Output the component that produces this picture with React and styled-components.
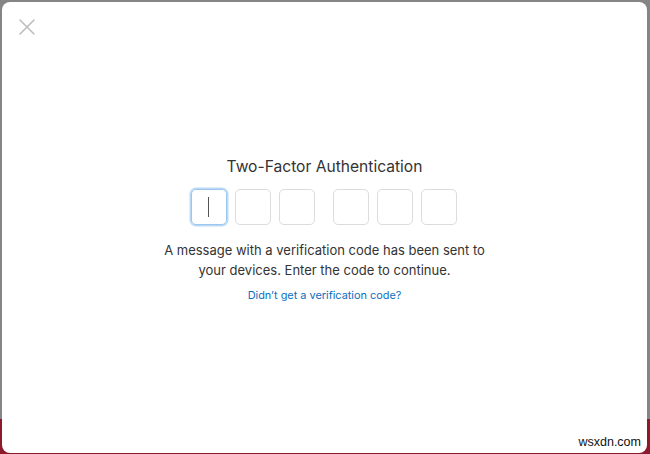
import styled, { createGlobalStyle } from "styled-components";

const GlobalStyle = createGlobalStyle`
  html, body {
    margin: 0;
    padding: 0;
    background: #858585;
  }
  body {
    font-family: "Liberation Sans", Arial, sans-serif;
  }
`;

const Backdrop = styled.div`
  width: 650px;
  height: 454px;
  box-sizing: border-box;
  padding: 2px 3px 1px 2px;
  background: linear-gradient(to bottom, #858585 0 419px, #8a1a2c 419px);
  overflow: hidden;
`;

const Modal = styled.div`
  position: relative;
  height: 100%;
  background: #fff;
  border-radius: 8px;
  display: flex;
  flex-direction: column;
  align-items: center;
  padding-top: 155px;
  box-sizing: border-box;
`;

const CloseButton = styled.button`
  position: absolute;
  top: 16px;
  left: 16px;
  width: 18px;
  height: 18px;
  padding: 0;
  border: 0;
  background: none;
  display: flex;
  align-items: center;
  justify-content: center;
`;

const Title = styled.h2`
  margin: 0;
  font-family: "Inter", "Liberation Sans", sans-serif;
  font-weight: 400;
  font-size: 15.6px;
  line-height: 20px;
  color: #333;
`;

const CodeRow = styled.div`
  display: flex;
  gap: 18px;
  margin-top: 12px;
  margin-left: -2px;
`;

const CodeGroup = styled.div`
  display: flex;
  gap: 8px;
`;

const Digit = styled.div`
  width: 36px;
  height: 36px;
  box-sizing: border-box;
  border-radius: 5px;
  border: 1px solid ${(p) => (p.$active ? "#9cc6ee" : "#dcdcdc")};
  box-shadow: ${(p) => (p.$active ? "0 0 0 1.5px #b9d9f7" : "none")};
  display: flex;
  align-items: center;
  justify-content: center;
`;

const Caret = styled.span`
  width: 1px;
  height: 20px;
  background: #555;
`;

const Message = styled.p`
  margin: 15px 0 0;
  font-family: "Inter", "Liberation Sans", sans-serif;
  font-size: 13px;
  line-height: 20px;
  color: #333;
  text-align: center;
  width: 330px;
`;

const HelpLink = styled.a`
  margin-top: 8px;
  font-family: "Inter", "Liberation Sans", sans-serif;
  font-size: 10.9px;
  color: #0a6fbd;
  text-decoration: none;
`;

const Watermark = styled.span`
  position: absolute;
  right: 6px;
  bottom: 4px;
  font-family: "Liberation Sans", Arial, sans-serif;
  font-size: 12.5px;
  color: #111;
`;

const App = () => {
  const digits = [0, 1, 2];
  return (
    <>
      <GlobalStyle />
      <Backdrop>
        <Modal>
          <CloseButton aria-label="Close">
            <svg width="18" height="18" viewBox="0 0 18 18">
              <path
                d="M2 2 L16 16 M16 2 L2 16"
                stroke="#bdbdbd"
                strokeWidth="1.6"
                strokeLinecap="round"
              />
            </svg>
          </CloseButton>
          <Title>Two-Factor Authentication</Title>
          <CodeRow>
            <CodeGroup>
              {digits.map((d) => (
                <Digit key={d} $active={d === 0}>
                  {d === 0 && <Caret />}
                </Digit>
              ))}
            </CodeGroup>
            <CodeGroup>
              {digits.map((d) => (
                <Digit key={d} />
              ))}
            </CodeGroup>
          </CodeRow>
          <Message>
            A message with a verification code has been sent to your devices.
            Enter the code to continue.
          </Message>
          <HelpLink href="#">Didn’t get a verification code?</HelpLink>
          <Watermark>wsxdn.com</Watermark>
        </Modal>
      </Backdrop>
    </>
  );
};

export default App;
